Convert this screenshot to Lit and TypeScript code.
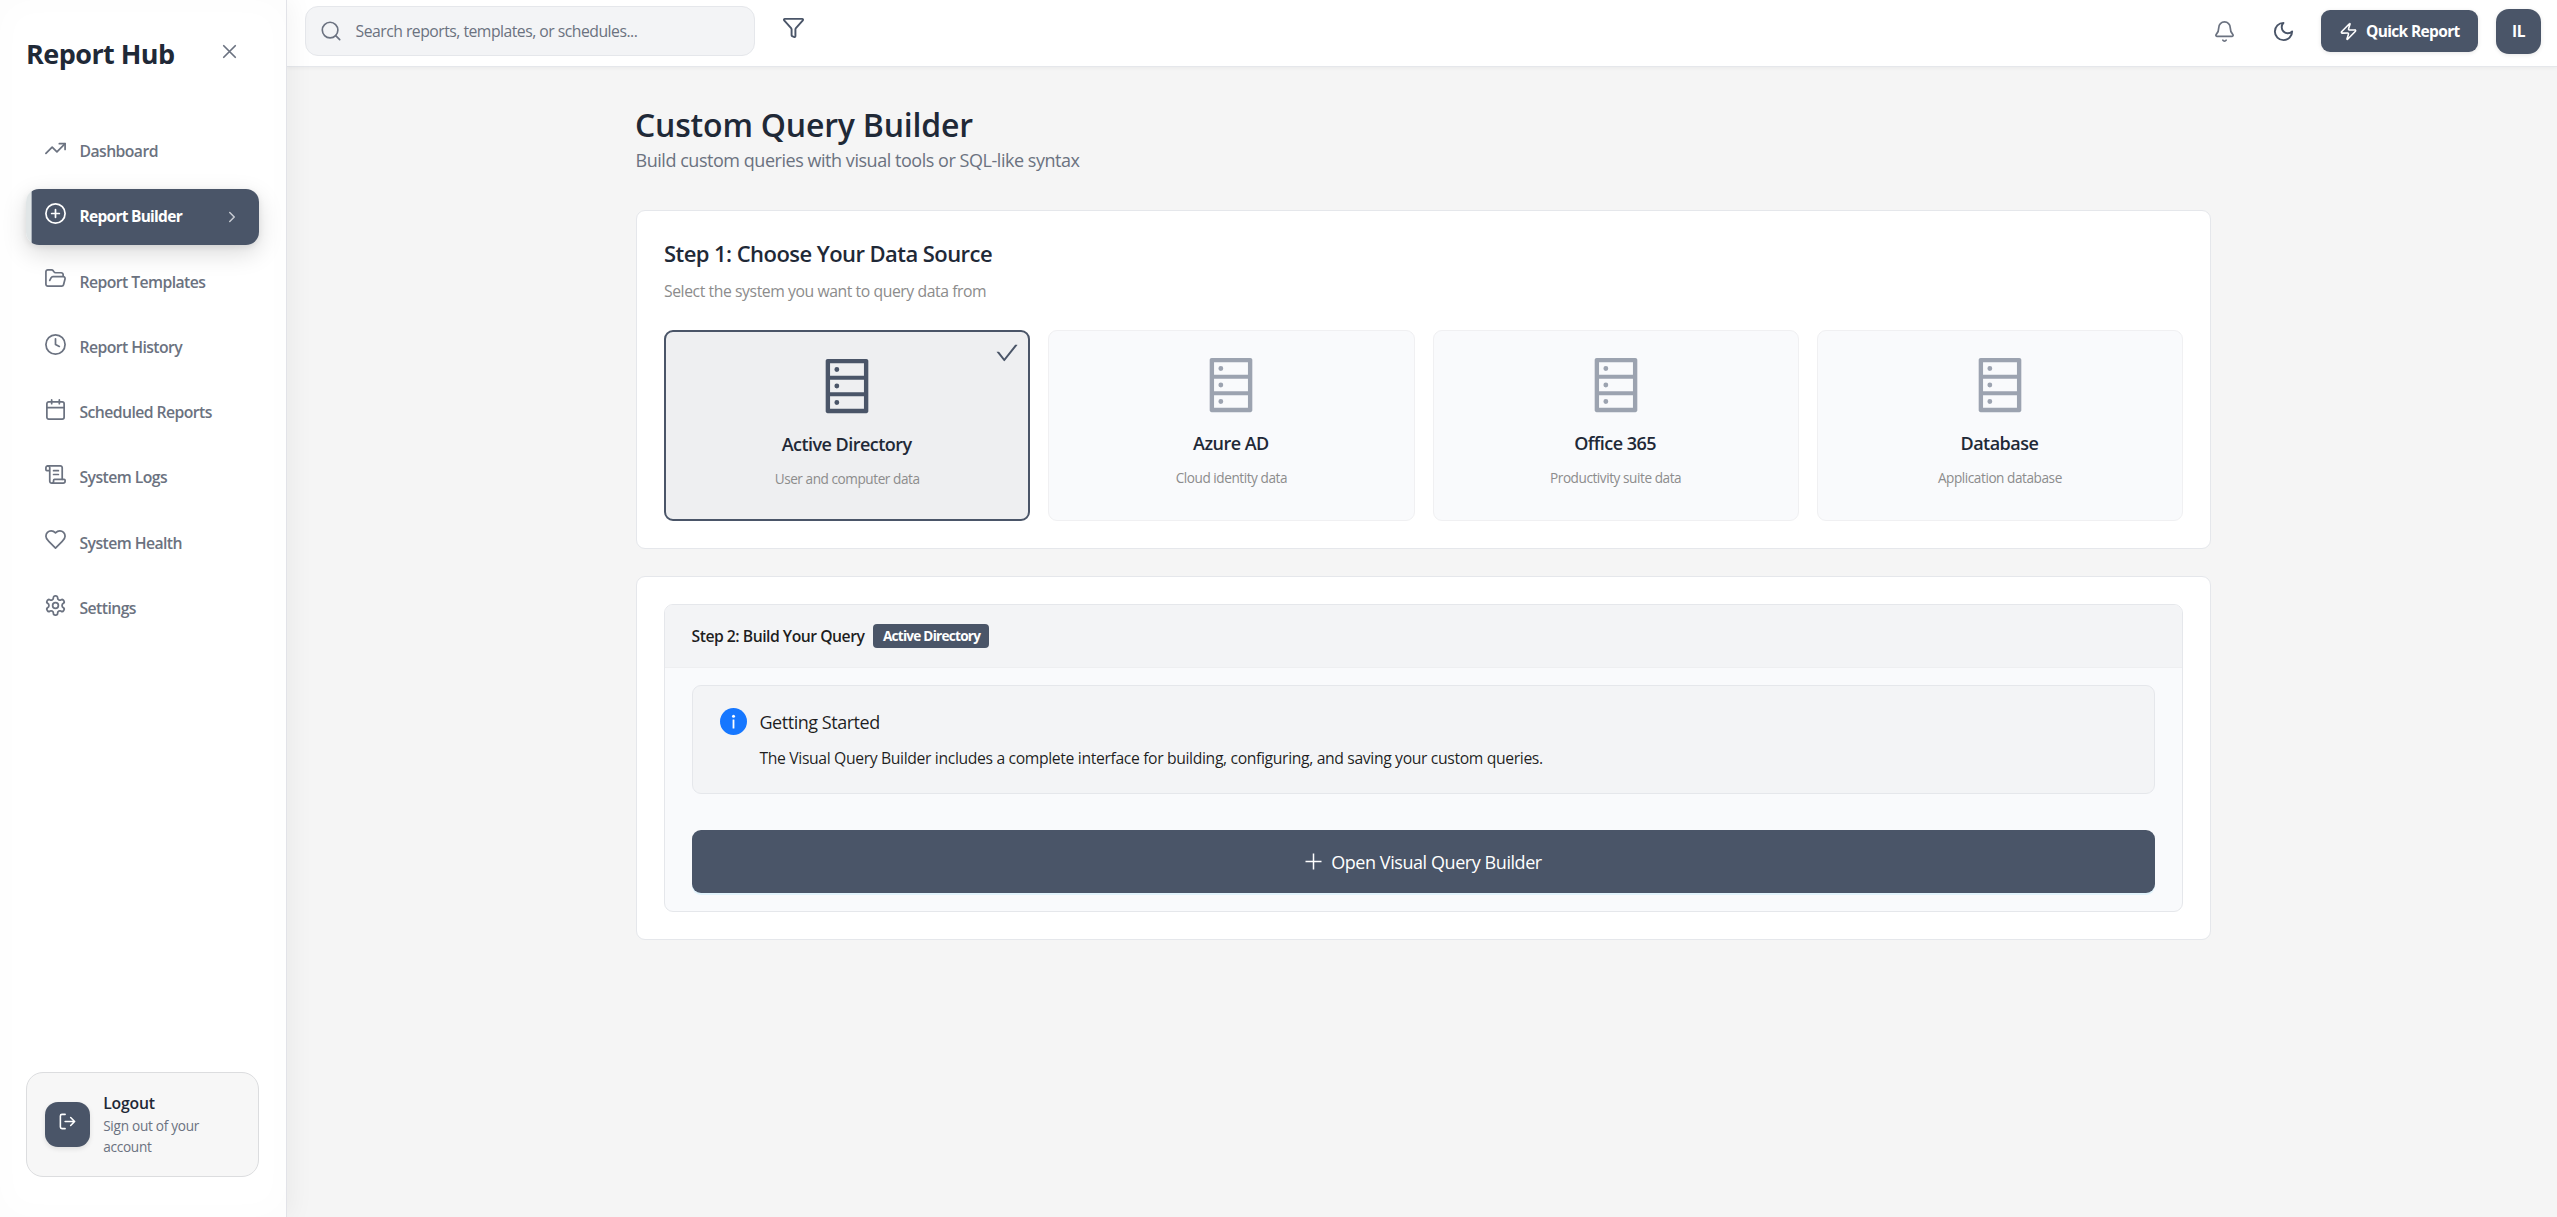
import { LitElement, html, css, svg, SVGTemplateResult } from "lit";
import { customElement, property, state } from "lit/decorators.js";
import { classMap } from "lit/directives/class-map.js";

/* Stroke icons on a 24-unit grid. */
const ICONS: Record<string, SVGTemplateResult> = {
  close: svg`<path d="M18 6 6 18M6 6l12 12"/>`,
  trend: svg`<path d="M22 7l-8.500 8.500-5-5L2 17"/><path d="M16 7h6v6"/>`,
  plusCircle: svg`<circle cx="12" cy="12" r="10"/><path d="M8 12h8M12 8v8"/>`,
  folder: svg`<path d="m6 14 1.500-2.900A2 2 0 0 1 9.240 10H20a2 2 0 0 1 1.940 2.500l-1.540 6a2 2 0 0 1-1.950 1.500H4a2 2 0 0 1-2-2V5a2 2 0 0 1 2-2h3.900a2 2 0 0 1 1.690.9l.81 1.200a2 2 0 0 0 1.670.9H18a2 2 0 0 1 2 2v2"/>`,
  clock: svg`<circle cx="12" cy="12" r="10"/><path d="M12 6v6l4 2"/>`,
  calendar: svg`<path d="M8 2v4M16 2v4M3 10h18"/><rect x="3" y="4" width="18" height="18" rx="2"/>`,
  scroll: svg`<path d="M15 12h-5M15 8h-5M19 17V5a2 2 0 0 0-2-2H4"/><path d="M8 21h12a2 2 0 0 0 2-2v-1a1 1 0 0 0-1-1H11a1 1 0 0 0-1 1v1a2 2 0 1 1-4 0V5a2 2 0 1 0-4 0v2a1 1 0 0 0 1 1h3"/>`,
  heart: svg`<path d="M19 14c1.490-1.460 3-3.210 3-5.500A5.500 5.500 0 0 0 16.500 3c-1.760 0-3 .5-4.500 2-1.500-1.500-2.740-2-4.500-2A5.500 5.500 0 0 0 2 8.500c0 2.300 1.500 4.050 3 5.500l7 7Z"/>`,
  gear: svg`<path d="M12.220 2h-.44a2 2 0 0 0-2 2v.18a2 2 0 0 1-1 1.730l-.43.25a2 2 0 0 1-2 0l-.15-.08a2 2 0 0 0-2.730.73l-.22.38a2 2 0 0 0 .73 2.730l.15.1a2 2 0 0 1 1 1.720v.51a2 2 0 0 1-1 1.740l-.15.09a2 2 0 0 0-.73 2.730l.22.38a2 2 0 0 0 2.730.73l.15-.08a2 2 0 0 1 2 0l.43.25a2 2 0 0 1 1 1.730V20a2 2 0 0 0 2 2h.44a2 2 0 0 0 2-2v-.18a2 2 0 0 1 1-1.730l.43-.25a2 2 0 0 1 2 0l.15.08a2 2 0 0 0 2.730-.73l.22-.39a2 2 0 0 0-.73-2.730l-.15-.08a2 2 0 0 1-1-1.740v-.5a2 2 0 0 1 1-1.740l.15-.09a2 2 0 0 0 .73-2.730l-.22-.38a2 2 0 0 0-2.730-.73l-.15.08a2 2 0 0 1-2 0l-.43-.25a2 2 0 0 1-1-1.730V4a2 2 0 0 0-2-2z"/><circle cx="12" cy="12" r="3"/>`,
  chevron: svg`<path d="m9 18 6-6-6-6"/>`,
  logout: svg`<path d="M9 21H5a2 2 0 0 1-2-2V5a2 2 0 0 1 2-2h4M16 17l5-5-5-5M21 12H9"/>`,
  search: svg`<circle cx="11" cy="11" r="8.500"/><path d="m21.500 21.500-4.400-4.400"/>`,
  funnel: svg`<path d="M10 20a1 1 0 0 0 .553.895l2 1A1 1 0 0 0 14 21v-7a2 2 0 0 1 .517-1.341L21.740 4.670A1 1 0 0 0 21 3H3a1 1 0 0 0-.742 1.670l7.225 7.989A2 2 0 0 1 10 14z"/>`,
  bell: svg`<path d="M10.268 21a2 2 0 0 0 3.464 0"/><path d="M3.262 15.326A1 1 0 0 0 4 17h16a1 1 0 0 0 .740-1.673C19.410 13.956 18 12.499 18 8A6 6 0 0 0 6 8c0 4.499-1.411 5.956-2.738 7.326"/>`,
  moon: svg`<path d="M12 3a6 6 0 0 0 9 9 9 9 0 1 1-9-9Z"/>`,
  zap: svg`<path d="M4 14a1 1 0 0 1-.78-1.630l9.900-10.200a.5.5 0 0 1 .86.46l-1.920 6.020A1 1 0 0 0 13 10h7a1 1 0 0 1 .78 1.630l-9.900 10.200a.5.5 0 0 1-.86-.46l1.920-6.020A1 1 0 0 0 11 14z"/>`,
};

@customElement("line-icon")
class LineIcon extends LitElement {
  @property() name = "";
  @property({ type: Number }) weight = 1.8;
  static styles = css`
    :host { display: block; flex: none; width: 23px; height: 23px; }
    svg { display: block; width: 100%; height: 100%; fill: none; stroke: currentColor; stroke-linecap: round; stroke-linejoin: round; }
  `;
  render() {
    return html`<svg viewBox="0 0 24 24" stroke-width=${this.weight}>${ICONS[this.name]}</svg>`;
  }
}

const NAV = [
  ["trend", "Dashboard"],
  ["plusCircle", "Report Builder"],
  ["folder", "Report Templates"],
  ["clock", "Report History"],
  ["calendar", "Scheduled Reports"],
  ["scroll", "System Logs"],
  ["heart", "System Health"],
  ["gear", "Settings"],
];

@customElement("side-bar")
class SideBar extends LitElement {
  @state() active = "Report Builder";
  static styles = css`
    :host {
      display: flex; flex-direction: column; box-sizing: border-box; width: 287px; height: 1217px;
      padding: 36px 27px 40px 26px; border-right: 1px solid #e2e3e8; background: #fff;
      box-shadow: 4px 0 24px rgba(0, 0, 0, 0.05), inset 0 0 36px rgba(0, 0, 0, 0.015);
      position: relative; z-index: 2;
    }
    .brand { display: flex; justify-content: space-between; padding-right: 18px; height: 87.700px; }
    .title { margin: 0; font-size: 27px; line-height: 36px; font-weight: 700; letter-spacing: -0.55px; color: #1f2937; }
    .close { width: 23px; height: 23px; margin-top: 4px; color: #6b7280; }
    nav { display: flex; flex-direction: column; gap: 9.300px; }
    .item {
      display: flex; align-items: center; box-sizing: border-box; height: 56px; padding: 0 16px 0 18px;
      border-radius: 13px; color: #6b7280; font-size: 15.750px; font-weight: 600; letter-spacing: -0.57px;
    }
    .item line-icon { margin: 0 12.500px 7px 0; }
    .label { flex: 1; margin-top: -1.500px; white-space: nowrap; }
    .item.active {
      color: #fff; font-size: 15.500px; font-weight: 700; letter-spacing: -0.73px;
      background: linear-gradient(90deg, #e1e6e7 0 4.500px, #aab1ba 4.500px 5.500px, #4a5568 5.500px);
      box-shadow: 0 8px 24px rgba(0, 0, 0, 0.15), 0 2px 6px rgba(0, 0, 0, 0.08);
    }
    .item .arrow { width: 18px; height: 18px; margin: 0 2px 0 0; color: #c9cdd4; }
    .logout {
      display: flex; align-items: center; gap: 13.200px; box-sizing: border-box; height: 105px; margin-top: auto;
      padding: 0 18px; border: 1px solid #dcdddf; border-radius: 17px; background: #f7f7f7;
    }
    .tile { display: flex; justify-content: center; flex: none; width: 45px; height: 45px; border-radius: 13px; background: #4a5568; color: #fff; box-shadow: 0 2px 5px rgba(0, 0, 0, 0.1); }
    .tile line-icon { width: 19px; height: 19px; margin-top: 9.500px; }
    .name { margin-top: -1px; font-size: 15.750px; line-height: 24px; font-weight: 600; letter-spacing: -0.2px; color: #1f2937; }
    .hint { font-size: 13.600px; line-height: 21px; letter-spacing: -0.27px; color: #6b7280; }
  `;
  render() {
    return html`
      <div class="brand"><h1 class="title">Report Hub</h1><line-icon class="close" name="close"></line-icon></div>
      <nav>
        ${NAV.map(([icon, label]) => html`
          <div class=${classMap({ item: true, active: label === this.active })} @click=${() => (this.active = label)}>
            <line-icon name=${icon}></line-icon>
            <span class="label">${label}</span>
            ${label === this.active ? html`<line-icon class="arrow" name="chevron" weight="2"></line-icon>` : ""}
          </div>`)}
      </nav>
      <div class="logout">
        <div class="tile"><line-icon name="logout" weight="2"></line-icon></div>
        <div><div class="name">Logout</div><div class="hint">Sign out of your account</div></div>
      </div>`;
  }
}

@customElement("top-bar")
class TopBar extends LitElement {
  static styles = css`
    :host {
      display: flex; align-items: center; box-sizing: border-box; height: 67px; padding: 0 16px 4px 18px;
      background: #fff; border-bottom: 1px solid #e5e7eb; box-shadow: 0 1px 4px rgba(0, 0, 0, 0.05);
      position: relative; z-index: 1; color: #4a5568; font-size: 15.750px;
    }
    .search {
      display: flex; align-items: center; gap: 14px; box-sizing: border-box; width: 450px; height: 50px;
      padding-left: 13.500px; border: 1px solid #e5e7eb; border-radius: 13px; background: #f3f4f6; color: #6b7280;
    }
    .query { letter-spacing: -0.51px; white-space: nowrap; }
    .search line-icon { width: 22px; height: 22px; }
    .filter { margin: 0 0 7px 27px; }
    .bell { margin-left: auto; color: #6b7280; }
    .moon { margin-left: 36px; }
    .quick {
      display: flex; align-items: center; gap: 8.500px; box-sizing: border-box; width: 157px; height: 42px; margin-left: 26px;
      padding-left: 17.500px; border-radius: 9px; background: #4a5568; color: #fff; font-size: 15.500px; font-weight: 700;
      letter-spacing: -0.65px; white-space: nowrap; box-shadow: 0 1px 4px rgba(0, 0, 0, 0.1);
    }
    .quick line-icon { width: 19px; height: 19px; }
    .avatar {
      display: flex; align-items: center; justify-content: center; width: 45px; height: 45px; margin-left: 18px;
      border-radius: 13px; background: #4a5568; color: #fff; font-size: 15.500px; font-weight: 700; letter-spacing: -0.5px;
      box-shadow: 0 1px 4px rgba(0, 0, 0, 0.1);
    }
  `;
  render() {
    return html`
      <div class="search"><line-icon name="search"></line-icon><span class="query">Search reports, templates, or schedules...</span></div>
      <line-icon class="filter" name="funnel" weight="2"></line-icon>
      <line-icon class="bell" name="bell"></line-icon>
      <line-icon class="moon" name="moon" weight="2"></line-icon>
      <div class="quick"><line-icon name="zap" weight="2"></line-icon>Quick Report</div>
      <div class="avatar">IL</div>`;
  }
}

const SOURCES = [
  ["Active Directory", "User and computer data"],
  ["Azure AD", "Cloud identity data"],
  ["Office 365", "Productivity suite data"],
  ["Database", "Application database"],
];

@customElement("query-builder")
class QueryBuilder extends LitElement {
  @state() source = "Active Directory";
  static styles = css`
    :host { display: block; width: 1575px; padding: 38px 0 0 349px; }
    .heading { margin: 0 0 0 -1px; font-size: 32px; line-height: 40px; font-weight: 600; letter-spacing: -0.2px; color: #1f2937; }
    .lead { margin: 1px 0 36px -0.500px; font-size: 18px; line-height: 28px; letter-spacing: -0.46px; color: #6b7280; }
    .card { box-sizing: border-box; padding: 27px; border: 1px solid #e5e7eb; border-radius: 9px; background: #fff; }
    .card + .card { margin-top: 27px; }
    .step { margin: 0; font-size: 22px; line-height: 30px; font-weight: 600; letter-spacing: -0.56px; color: #1f2937; }
    .note { margin: 11px 0 27px; font-size: 15.750px; line-height: 24px; letter-spacing: -0.43px; color: #8c8c8c; }
    .grid { display: grid; grid-template-columns: repeat(4, 1fr); gap: 18px; }
    .source {
      position: relative; display: flex; flex-direction: column; align-items: center; box-sizing: border-box; height: 191px;
      padding-top: 23px; border: 1px solid #f0f0f2; border-radius: 9px; background: #f9fafc; color: #9ca3b0;
    }
    .source.on { border: 2px solid #4a5568; background: #eeeff1; color: #4a5568; }
    .rack { width: 62px; height: 62px; fill: currentColor; }
    .check { position: absolute; top: 7.500px; right: 8px; width: 26px; height: 26px; fill: currentColor; }
    .kind { margin: 14px 1px 0 0; font-size: 18px; line-height: 26px; font-weight: 600; letter-spacing: -0.53px; color: #1f2937; }
    .about { margin-top: 11px; font-size: 13.600px; line-height: 22px; letter-spacing: -0.44px; color: #8c8c8c; }
    .panel { box-sizing: border-box; height: 308px; border: 1px solid #e5e7eb; border-radius: 9px; background: #f9fafc; overflow: hidden; }
    .bar {
      display: flex; align-items: center; gap: 9px; height: 62px; padding: 0 27px 0 26.500px; border-bottom: 1px solid #eeeff1;
      background: #f3f4f6; font-size: 15.750px; font-weight: 600; letter-spacing: -0.5px; color: rgba(0, 0, 0, 0.88);
    }
    .tag { padding: 0 9px 0 9.500px; border-radius: 4px; background: #4a5568; color: #fff; font-size: 13.600px; line-height: 24px; font-weight: 700; letter-spacing: -0.75px; }
    .body { padding: 17px 27px 0; }
    .info {
      display: flex; gap: 12.500px; box-sizing: border-box; height: 109px; padding: 22px 27px;
      border: 1px solid #e5e7eb; border-radius: 9px; background: #f3f4f6; color: rgba(0, 0, 0, 0.88);
    }
    .mark { flex: none; width: 27px; height: 27px; }
    .start { font-size: 18px; line-height: 28px; letter-spacing: -0.47px; }
    .text { margin-top: 9.500px; font-size: 15.750px; line-height: 24px; letter-spacing: -0.37px; }
    .open {
      display: flex; align-items: center; justify-content: center; gap: 9px; height: 63px; margin-top: 36px;
      border-radius: 9px; background: #4a5568; color: #fff; font-size: 18px; letter-spacing: -0.43px;
      box-shadow: 0 2px 0 #e1f3fc;
    }
    .plus { width: 17px; height: 17px; stroke: currentColor; stroke-width: 1.500; }
  `;
  render() {
    return html`
      <h2 class="heading">Custom Query Builder</h2>
      <p class="lead">Build custom queries with visual tools or SQL-like syntax</p>
      <section class="card">
        <h3 class="step">Step 1: Choose Your Data Source</h3>
        <p class="note">Select the system you want to query data from</p>
        <div class="grid">
          ${SOURCES.map(([name, about]) => html`
            <div class=${classMap({ source: true, on: name === this.source })} @click=${() => (this.source = name)}>
              <svg class="rack" viewBox="0 0 1024 1024"><path d="M832 64H192c-17.700 0-32 14.300-32 32v832c0 17.700 14.300 32 32 32h640c17.700 0 32-14.300 32-32V96c0-17.700-14.300-32-32-32zm-600 72h560v208H232V136zm560 480H232V408h560v208zm0 272H232V680h560v208zM304 240a40 40 0 1080 0 40 40 0 10-80 0zm0 272a40 40 0 1080 0 40 40 0 10-80 0zm0 272a40 40 0 1080 0 40 40 0 10-80 0z"/></svg>
              <div class="kind">${name}</div>
              <div class="about">${about}</div>
              ${name === this.source ? html`<svg class="check" viewBox="0 0 1024 1024"><path d="M912 190h-69.900c-9.800 0-19.100 4.500-25.100 12.200L404.700 724.500 207 474a32 32 0 00-25.100-12.200H112c-6.700 0-10.400 7.700-6.300 12.900l273.900 347c12.800 16.200 37.400 16.200 50.300 0l488.400-618.900c4.100-5.100.4-12.800-6.300-12.800z"/></svg>` : ""}
            </div>`)}
        </div>
      </section>
      <section class="card">
        <div class="panel">
          <div class="bar"><span>Step 2: Build Your Query</span><span class="tag">${this.source}</span></div>
          <div class="body">
            <div class="info">
              <svg class="mark" viewBox="0 0 27 27"><circle cx="13.500" cy="13.500" r="13.500" fill="#1677ff"/><circle cx="13.500" cy="8.200" r="1.500" fill="#fff"/><rect x="12.600" y="11.500" width="1.800" height="9" rx=".3" fill="#fff"/></svg>
              <div>
                <div class="start">Getting Started</div>
                <div class="text">The Visual Query Builder includes a complete interface for building, configuring, and saving your custom queries.</div>
              </div>
            </div>
            <div class="open"><svg class="plus" viewBox="0 0 17 17"><path d="M8.500 .5v16M.5 8.500h16"/></svg><span>Open Visual Query Builder</span></div>
          </div>
        </div>
      </section>`;
  }
}

@customElement("app-root")
class AppRoot extends LitElement {
  static styles = css`
    :host {
      display: flex; width: 2557px; height: 1217px; overflow: hidden; background: #f5f5f5;
      font-family: "Open Sans", "Noto Sans", sans-serif;
    }
    .main { flex: 1; min-width: 0; }
  `;
  render() {
    return html`<side-bar></side-bar><div class="main"><top-bar></top-bar><query-builder></query-builder></div>`;
  }
}
